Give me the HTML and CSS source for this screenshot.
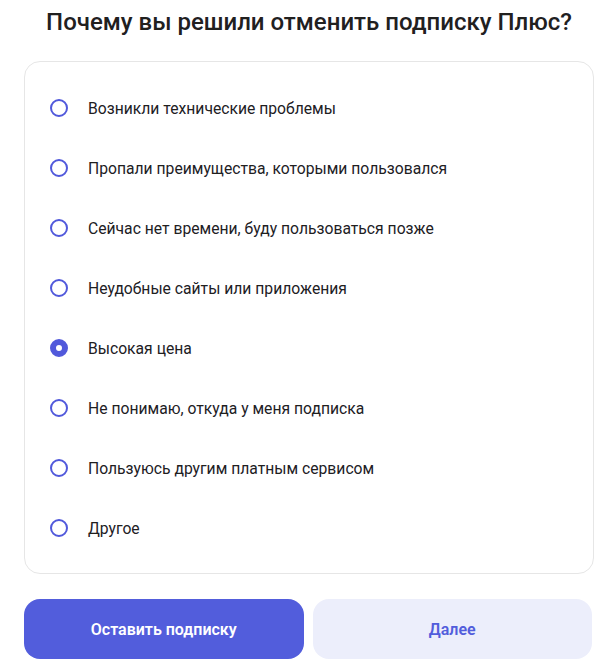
FILE: index.html
```html
<!DOCTYPE html>
<html lang="ru">
<head>
    <meta charset="UTF-8">
    <meta name="viewport" content="width=device-width, initial-scale=1.0">
    <title>Отмена подписки</title>
    <link rel="stylesheet" href="styles.css">
</head>
<body>

    <div class="container">
        <h1>Почему вы решили отменить подписку Плюс?</h1>

        <form class="reasons">
            <label class="reason">
                <input type="radio" name="reason">
                <span class="radio"></span>
                <span class="reason-text">Возникли технические проблемы</span>
            </label>
            <label class="reason">
                <input type="radio" name="reason">
                <span class="radio"></span>
                <span class="reason-text">Пропали преимущества, которыми пользовался</span>
            </label>
            <label class="reason">
                <input type="radio" name="reason">
                <span class="radio"></span>
                <span class="reason-text">Сейчас нет времени, буду пользоваться позже</span>
            </label>
            <label class="reason">
                <input type="radio" name="reason">
                <span class="radio"></span>
                <span class="reason-text">Неудобные сайты или приложения</span>
            </label>
            <label class="reason">
                <input type="radio" name="reason" checked>
                <span class="radio"></span>
                <span class="reason-text">Высокая цена</span>
            </label>
            <label class="reason">
                <input type="radio" name="reason">
                <span class="radio"></span>
                <span class="reason-text">Не понимаю, откуда у меня подписка</span>
            </label>
            <label class="reason">
                <input type="radio" name="reason">
                <span class="radio"></span>
                <span class="reason-text">Пользуюсь другим платным сервисом</span>
            </label>
            <label class="reason">
                <input type="radio" name="reason">
                <span class="radio"></span>
                <span class="reason-text">Другое</span>
            </label>
        </form>

        <div class="actions">
            <button type="button" class="btn btn-primary">Оставить подписку</button>
            <button type="button" class="btn btn-secondary">Далее</button>
        </div>
    </div>

</body>
</html>
```

FILE: styles.css
```css
body {
    font-family: Roboto, "Noto Sans", Arial, sans-serif;
    margin: 0;
    background-color: #fff;
    color: #21201f;
}

.container {
    width: 570px;
    padding: 0 17px 0 24px;
}

h1 {
    margin: 0;
    padding: 7px 0 0;
    height: 61px;
    box-sizing: border-box;
    text-align: center;
    font-size: 24px;
    font-weight: 500;
    line-height: 30px;
    color: #21201f;
}

/* Список причин */
.reasons {
    border: 1px solid #e6e6e6;
    border-radius: 16px;
    padding: 16px 0 15px;
}

.reason {
    display: flex;
    align-items: center;
    height: 60px;
    padding-left: 25px;
    cursor: pointer;
}

.reason input {
    display: none;
}

.radio {
    width: 18px;
    height: 18px;
    border: 2px solid #5159db;
    border-radius: 50%;
    box-sizing: border-box;
    flex-shrink: 0;
}

.reason input:checked + .radio {
    border-width: 6px;
}

.reason-text {
    margin-left: 20px;
    font-size: 15.7px;
    color: #21201f;
}

/* Кнопки */
.actions {
    display: flex;
    gap: 9px;
    margin: 25px 2px 0 0;
}

.btn {
    flex: 1;
    height: 60px;
    border: none;
    border-radius: 16px;
    font-family: inherit;
    font-size: 16px;
    font-weight: 600;
    cursor: pointer;
}

.btn-primary {
    background-color: #525ddc;
    color: #fff;
}

.btn-secondary {
    background-color: #eceefb;
    color: #525ddc;
}
```
